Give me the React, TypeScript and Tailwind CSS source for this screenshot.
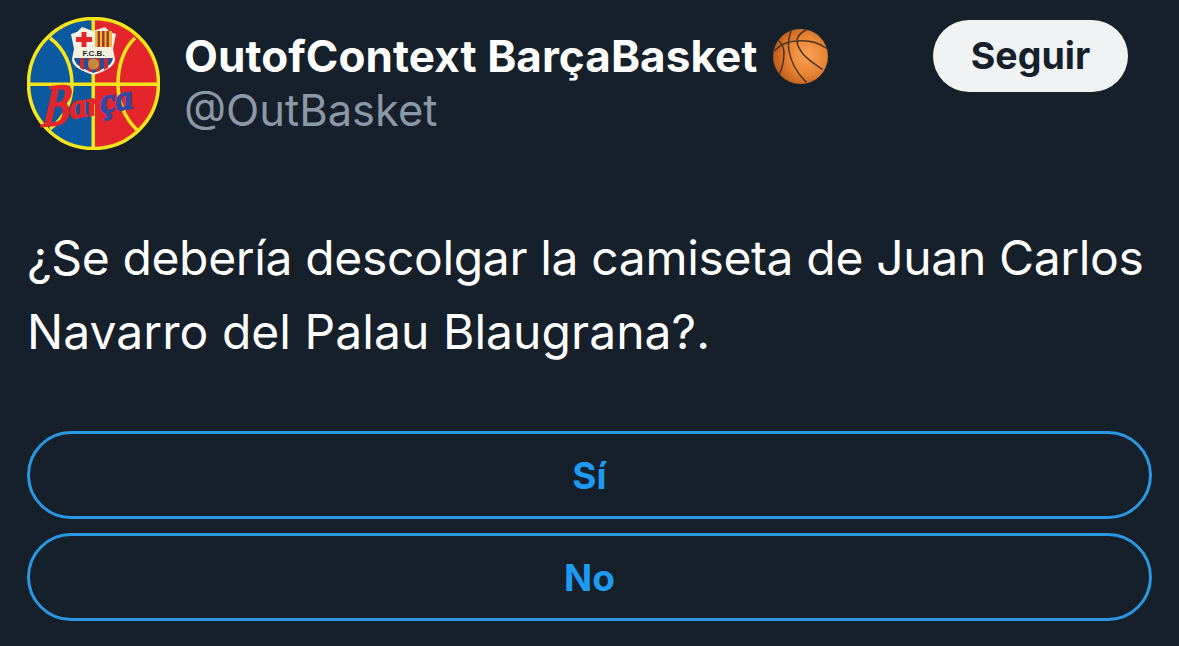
import React from 'react';

const fontStack = { fontFamily: 'Inter, "Noto Sans", sans-serif' };

const BarcaLogo = () => (
  <svg viewBox="0 0 133 133" className="w-[133px] h-[133px] shrink-0">
    <defs>
      <clipPath id="ball"><circle cx="66.5" cy="66.5" r="64" /></clipPath>
    </defs>
    <g clipPath="url(#ball)">
      <rect x="0" y="0" width="66" height="133" fill="#0b5a9f" />
      <rect x="66" y="0" width="67" height="133" fill="#e4262c" />
      <rect x="64.500" y="0" width="3.500" height="133" fill="#f7e51c" />
      <rect x="0" y="65.500" width="133" height="3.500" fill="#f7e51c" />
      <path d="M23 21 C38 32 45 50 45 67 C45 84 38 100 23 112" fill="none" stroke="#f7e51c" strokeWidth="3.500" />
      <path d="M108 21 C96 32 91 50 91 67 C91 84 97 100 110 113" fill="none" stroke="#f7e51c" strokeWidth="3.500" />
    </g>
    <circle cx="66.500" cy="66.500" r="65" fill="none" stroke="#f7e51c" strokeWidth="3.500" />
    {/* crest */}
    <path d="M44 17 L50 15 L55 10 L66 14 L78 10 L83 15 L89 17 L86 32 L88 42 C88 50 78 54 66.500 58 C55 54 45 50 45 42 L47 32 Z" fill="#f4f0e0" />
    <rect x="49" y="15" width="16" height="15" fill="#f8f4ea" />
    <rect x="54.500" y="15" width="5" height="15" fill="#e2262c" />
    <rect x="49" y="20" width="16" height="5" fill="#e2262c" />
    <rect x="68" y="14" width="17" height="16" fill="#e9b93a" />
    <rect x="70.500" y="14" width="2.500" height="16" fill="#a8382b" />
    <rect x="75" y="14" width="2.500" height="16" fill="#a8382b" />
    <rect x="79.500" y="14" width="2.500" height="16" fill="#a8382b" />
    <text x="66.500" y="38.500" textAnchor="middle" fontSize="8" fontWeight="700" fill="#1d1d1d" style={{ fontFamily: '"Liberation Sans", sans-serif' }}>F.C.B.</text>
    <path d="M47 41 H86 C85 49 76 52 66.500 56 C57 52 48 49 47 41 Z" fill="#1f4f97" />
    <path d="M53 41 h4 v12 l-4 -2 Z M61 41 h4 v14 l-4 -1 Z M69 41 h4 v13 l-4 1 Z M77 41 h4 v10 l-4 2 Z" fill="#c52a35" />
    <circle cx="66.500" cy="47" r="5.500" fill="#c98a3d" />
    {/* script wordmark */}
    <g style={{ fontFamily: '"Liberation Serif", serif' }} fontStyle="italic" fontWeight="700">
      <text transform="translate(14 110) rotate(-6) skewX(-12) scale(0.72 1)" fontSize="60" fill="#e4262c" stroke="#e4262c" strokeWidth="1">B</text>
      <text transform="translate(44 102) rotate(-10)" fontSize="35" strokeWidth="1.300">
        <tspan fill="#e4262c" stroke="#e4262c">ar</tspan>
        <tspan fill="#2f4aa8" stroke="#2f4aa8">ça</tspan>
      </text>
    </g>
  </svg>
);

const BasketballIcon = () => (
  <svg viewBox="0 0 55 55" className="w-[55px] h-[55px] shrink-0">
    <defs>
      <radialGradient id="orange" cx="62%" cy="48%" r="62%">
        <stop offset="0%" stopColor="#f9a358" />
        <stop offset="55%" stopColor="#e98433" />
        <stop offset="100%" stopColor="#bd5a1c" />
      </radialGradient>
    </defs>
    <circle cx="27.500" cy="27.500" r="27.500" fill="url(#orange)" />
    <g fill="none" stroke="#4a3322" strokeWidth="1.500" strokeLinecap="round">
      <path d="M1 22 C8 15 16 12 24 12 C35 11 46 14 53 19" />
      <path d="M18 2 C15 10 15 16 16 22 C18 34 25 45 33 53" />
      <path d="M33 1 C27 4 24 8 24 12 C24 17 27 21 30 25 C35 31 43 36 49 40" />
      <path d="M6 12 C10 16 11 20 11 24 C11 32 9 39 7 44" />
    </g>
  </svg>
);

const PollOption = ({ label }: { label: string }) => (
  <div className="h-[88px] pt-[2px] rounded-full border-[3px] border-[#2b98e4] flex items-center justify-center text-[#1d9bf0] text-[37px] font-bold">
    {label}
  </div>
);

export default function App() {
  return (
    <div className="w-[1179px] h-[646px] overflow-hidden bg-[#15202b] text-white px-[27px]" style={fontStack}>
      <div className="flex items-start h-[150px] pt-[17px]">
        <BarcaLogo />
        <div className="ml-[24px] flex flex-col">
          <div className="flex items-center gap-[15px] h-[56px] mt-[11px]">
            <span className="text-[44px] leading-[56px] font-bold tracking-[0.08px] whitespace-nowrap">OutofContext BarçaBasket</span>
            <BasketballIcon />
          </div>
          <span className="text-[43.500px] leading-[50px] text-[#8b98a5] mt-[1px]">@OutBasket</span>
        </div>
        <div className="ml-auto mr-[24px] mt-[3px] w-[195px] h-[72px] rounded-full bg-[#eff3f4] text-[#15202b] flex items-center justify-center text-[37.500px] font-bold shrink-0">
          Seguir
        </div>
      </div>
      <div className="mt-[71px] text-[48px] leading-[74px]">
        <p className="tracking-[-0.35px] whitespace-nowrap">¿Se debería descolgar la camiseta de Juan Carlos</p>
        <p className="tracking-[0.05px] whitespace-nowrap">Navarro del Palau Blaugrana?.</p>
      </div>
      <div className="mt-[62px] flex flex-col gap-[14px] w-[1125px]">
        <PollOption label="Sí" />
        <PollOption label="No" />
      </div>
    </div>
  );
}
